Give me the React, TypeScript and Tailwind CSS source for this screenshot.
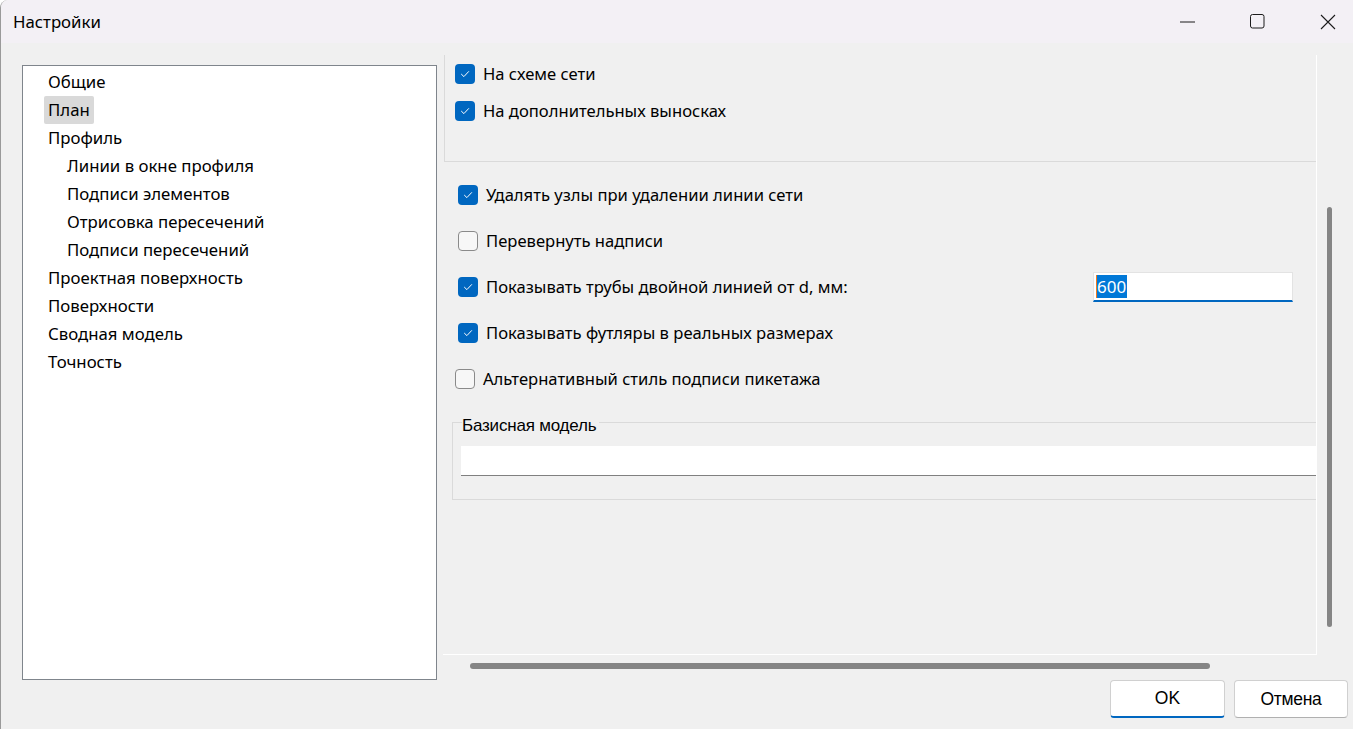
import React from 'react';

const font = { fontFamily: '"Noto Sans", "Open Sans", sans-serif' };
const narrow = { fontFamily: '"Liberation Sans", Arial, sans-serif' };

function Check({ checked }: { checked: boolean }) {
  if (!checked) {
    return <div className="w-[20px] h-[20px] shrink-0 rounded-[4px] border border-[#8a8a8a] bg-[#f7f7f7]" />;
  }
  return (
    <div className="w-[20px] h-[20px] shrink-0 rounded-[4px] bg-[#0067c0] flex items-center justify-center">
      <svg width="12" height="12" viewBox="0 0 12 12" fill="none">
        <path d="M2.5 6.3 L4.9 8.6 L9.6 3.6" stroke="white" strokeWidth="1" strokeLinecap="round" strokeLinejoin="round" />
      </svg>
    </div>
  );
}

function Row({ checked, label, children, pl = 'pl-[15px]' }: { checked: boolean; label: string; children?: React.ReactNode; pl?: string }) {
  return (
    <div className={`h-[46px] flex items-center ${pl}`}>
      <Check checked={checked} />
      <span className="ml-[8px] text-[16.6px] text-black">{label}</span>
      {children}
    </div>
  );
}

const tree: { label: string; sub?: boolean; selected?: boolean }[] = [
  { label: 'Общие' },
  { label: 'План', selected: true },
  { label: 'Профиль' },
  { label: 'Линии в окне профиля', sub: true },
  { label: 'Подписи элементов', sub: true },
  { label: 'Отрисовка пересечений', sub: true },
  { label: 'Подписи пересечений', sub: true },
  { label: 'Проектная поверхность' },
  { label: 'Поверхности' },
  { label: 'Сводная модель' },
  { label: 'Точность' },
];

export default function App() {
  return (
    <div style={font} className="w-[1353px] h-[729px] bg-[#f0f0f0] flex flex-col border-l border-[#9a9a9a] rounded-tl-[8px] overflow-hidden text-black">
      {/* title bar */}
      <div className="h-[43px] bg-[#f3f0f5] flex items-center shrink-0">
        <span className="ml-[12px] text-[16.8px]">Настройки</span>
        <div className="ml-auto flex h-full">
          <div className="w-[70px] flex items-center justify-center">
            <svg width="15" height="2" viewBox="0 0 15 2"><path d="M0 1 H15" stroke="#1b1b1b" strokeWidth="1" /></svg>
          </div>
          <div className="w-[70px] flex items-center justify-center">
            <svg width="15" height="15" viewBox="0 0 15 15"><rect x="0.5" y="0.5" width="13.5" height="13.5" rx="2" fill="none" stroke="#1b1b1b" strokeWidth="1" /></svg>
          </div>
          <div className="w-[61px] flex items-center pl-[28px]">
            <svg width="16" height="16" viewBox="0 0 16 16"><path d="M1 1 L15 15 M15 1 L1 15" stroke="#1b1b1b" strokeWidth="1.1" /></svg>
          </div>
        </div>
      </div>

      <div className="flex flex-1 min-h-0">
        {/* tree */}
        <div className="ml-[21px] mt-[22px] w-[415px] h-[615px] bg-white border border-[#7f858c] pt-[2px] shrink-0">
          {tree.map((t) => (
            <div key={t.label} className={`h-[28px] flex items-center ${t.sub ? 'pl-[40px]' : 'pl-[21px]'}`}>
              <span className={`px-[4px] h-[28px] flex items-center rounded-[2px] text-[16.8px] ${t.selected ? 'bg-[#d9d9d9]' : ''}`}>
                {t.label}
              </span>
            </div>
          ))}
        </div>

        {/* right column */}
        <div className="ml-[6px] flex-1 flex flex-col">
          <div className="flex mt-[12px]">
            {/* viewport */}
            <div className="w-[874px] h-[600px] border-r border-b border-white overflow-hidden">
              <div className="h-[107px] ml-[1px] border-l border-b border-[#dadada] pt-[9px] pl-[10px]">
                <div className="flex items-center h-[20px]">
                  <Check checked />
                  <span className="ml-[8px] text-[16.6px]">На схеме сети</span>
                </div>
                <div className="flex items-center h-[20px] mt-[17px]">
                  <Check checked />
                  <span className="ml-[8px] text-[16.6px]">На дополнительных выносках</span>
                </div>
              </div>

              <div className="mt-[10px]">
                <Row checked label="Удалять узлы при удалении линии сети" />
                <Row checked={false} label="Перевернуть надписи" />
                <Row checked label="Показывать трубы двойной линией от d, мм:">
                  <div className="ml-auto mr-[23px] w-[200px] h-[30px] bg-white border border-[#e3e3e3] border-b-2 border-b-[#0067c0] flex items-center pl-[2px]">
                    <span className="bg-[#0078d7] text-white text-[17px] leading-[23px] pr-[1px] border-l border-[#f07a1e]">600</span>
                  </div>
                </Row>
                <Row checked label="Показывать футляры в реальных размерах" />
                <Row checked={false} label="Альтернативный стиль подписи пикетажа" pl="pl-[12px]" />
              </div>

              {/* group box */}
              <div className="relative ml-[9px] mt-[20px] h-[78px] w-[900px] border border-[#dadada]">
                <span className="absolute left-[9px] top-[-10px] bg-[#f0f0f0] pr-[3px] text-[17px] tracking-[-0.2px]" style={narrow}>
                  Базисная модель
                </span>
                <div className="mt-[23px] ml-[8px] h-[30px] bg-white border-b border-[#808080]" />
              </div>
            </div>
            {/* vertical scrollbar */}
            <div className="w-[23px] pt-[152px] pl-[10px]">
              <div className="w-[5px] h-[420px] rounded-full bg-[#858585]" />
            </div>
          </div>

          {/* horizontal scrollbar */}
          <div className="h-[25px] pt-[8px] pl-[27px]">
            <div className="w-[740px] h-[6px] rounded-full bg-[#858585]" />
          </div>

          {/* buttons */}
          <div className="flex justify-end gap-[9px] pr-[5px]" style={narrow}>
            <button className="w-[115px] h-[38px] bg-white rounded-[4px] border border-[#d0d0d0] border-b-2 border-b-[#0067c0] text-[17.5px]">OK</button>
            <button className="w-[114px] h-[38px] bg-white rounded-[4px] border border-[#d0d0d0] border-b-[#b0b0b0] text-[17.5px] tracking-[-0.3px]">Отмена</button>
          </div>
        </div>
      </div>
    </div>
  );
}
